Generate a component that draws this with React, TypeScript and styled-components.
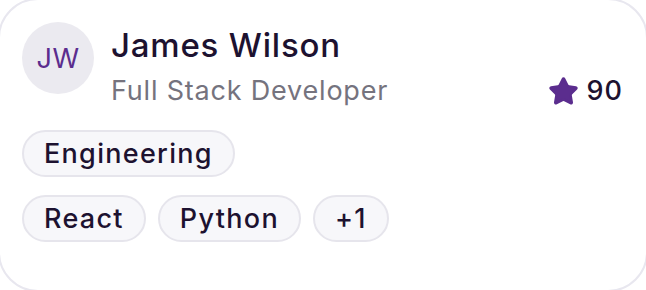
import React from "react";
import styled, { createGlobalStyle } from "styled-components";
import { Star } from "lucide-react";

const Global = createGlobalStyle`
  html, body { margin: 0; padding: 0; background: #ffffff; overflow: hidden; }
  body { font-family: Inter, "Noto Sans", sans-serif; -webkit-font-smoothing: antialiased; }
  * { box-sizing: border-box; }
`;

const Card = styled.div`
  margin: -2px;
  width: 650px;
  height: 294px;
  border: 2px solid #e8e7ef;
  border-radius: 40px;
  background: #ffffff;
  padding: 22px 24px 22px 22px;
  display: flex;
  flex-direction: column;
`;

const Header = styled.div`
  display: flex;
  align-items: flex-start;
  gap: 17px;
`;

const Avatar = styled.div`
  flex: none;
  width: 72px;
  height: 72px;
  border-radius: 50%;
  background: #ebeaf0;
  color: #5b2d8e;
  font-size: 27px;
  font-weight: 400;
  display: flex;
  align-items: center;
  justify-content: center;
  letter-spacing: 0.5px;
`;

const Info = styled.div`
  flex: 1;
  display: flex;
  flex-direction: column;
  padding-top: 3px;
`;

const Name = styled.div`
  font-size: 33px;
  line-height: 40px;
  font-weight: 500;
  color: #1d1230;
  letter-spacing: 0.8px;
`;

const SubRow = styled.div`
  display: flex;
  align-items: center;
  justify-content: space-between;
  margin-top: 8px;
`;

const Role = styled.div`
  font-size: 27px;
  line-height: 36px;
  color: #75737e;
  letter-spacing: 0.8px;
`;

const Rating = styled.div`
  display: flex;
  align-items: center;
  gap: 8px;
  font-size: 27px;
  line-height: 36px;
  font-weight: 500;
  color: #1d1230;
  letter-spacing: 1px;
  margin-right: -1px;
`;

const TagRow = styled.div<{ $top: number }>`
  display: flex;
  gap: 12px;
  margin-top: ${(p) => p.$top}px;
`;

const Tag = styled.span`
  display: inline-flex;
  align-items: center;
  height: 47px;
  padding: 0 20px;
  border: 2px solid #e6e5ec;
  border-radius: 999px;
  background: #f7f7fa;
  font-size: 27px;
  line-height: 30px;
  font-weight: 500;
  color: #1d1230;
  letter-spacing: 1.3px;
`;

export default function App() {
  return (
    <>
      <Global />
      <Card>
        <Header>
          <Avatar>JW</Avatar>
          <Info>
            <Name>James Wilson</Name>
            <SubRow>
              <Role>Full Stack Developer</Role>
              <Rating>
                <Star size={31} fill="#5b2d8e" color="#5b2d8e" strokeWidth={2} />
                90
              </Rating>
            </SubRow>
          </Info>
        </Header>
        <TagRow $top={21}>
          <Tag>Engineering</Tag>
        </TagRow>
        <TagRow $top={18}>
          <Tag>React</Tag>
          <Tag>Python</Tag>
          <Tag>+1</Tag>
        </TagRow>
      </Card>
    </>
  );
}
